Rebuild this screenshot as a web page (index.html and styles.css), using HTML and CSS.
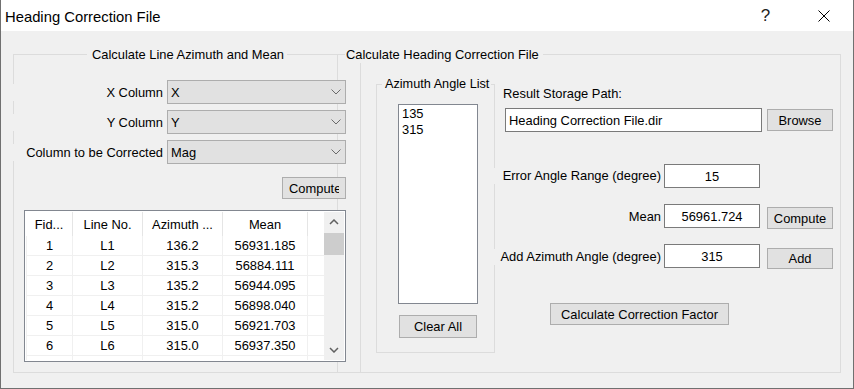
FILE: index.html
```html
<!DOCTYPE html>
<html lang="en">

<head>
  <meta charset="UTF-8" />
  <title>Heading Correction File</title>
  <link rel="stylesheet" href="styles.css">
</head>

<body>
  <div class="window">
    <div class="titlebar">
      <span class="title-text">Heading Correction File</span>
      <span class="title-help">?</span>
      <span class="title-close">
        <svg width="12" height="12" viewBox="0 0 12 12"><path d="M0.5 0.5 L11.5 11.5 M11.5 0.5 L0.5 11.5" stroke="#000" stroke-width="1" fill="none" /></svg>
      </span>
    </div>

    <div class="dialog">
      <!-- left: line azimuth -->
      <fieldset class="group group-line">
        <legend>Calculate Line Azimuth and Mean</legend>

        <div class="column-fields">
          <div class="field-row">
            <label class="field-label">X Column</label>
            <div class="combo"><span>X</span><svg width="10" height="6" viewBox="0 0 10 6"><path d="M0.5 0.5 L5 5 L9.5 0.5" fill="none" stroke="#6a6a6a" /></svg></div>
          </div>
          <div class="field-row">
            <label class="field-label">Y Column</label>
            <div class="combo"><span>Y</span><svg width="10" height="6" viewBox="0 0 10 6"><path d="M0.5 0.5 L5 5 L9.5 0.5" fill="none" stroke="#6a6a6a" /></svg></div>
          </div>
          <div class="field-row">
            <label class="field-label">Column to be Corrected</label>
            <div class="combo"><span>Mag</span><svg width="10" height="6" viewBox="0 0 10 6"><path d="M0.5 0.5 L5 5 L9.5 0.5" fill="none" stroke="#6a6a6a" /></svg></div>
          </div>
        </div>

        <div class="compute-row">
          <button class="btn btn-compute"><span>Compute</span></button>
        </div>

        <div class="table-view">
          <div class="grid">
            <div class="grid-head">
              <span>Fid...</span><span>Line No.</span><span>Azimuth ...</span><span>Mean</span><span></span>
            </div>
            <div class="grid-row"><span>1</span><span>L1</span><span>136.2</span><span>56931.185</span><span></span></div>
            <div class="grid-row"><span>2</span><span>L2</span><span>315.3</span><span>56884.111</span><span></span></div>
            <div class="grid-row"><span>3</span><span>L3</span><span>135.2</span><span>56944.095</span><span></span></div>
            <div class="grid-row"><span>4</span><span>L4</span><span>315.2</span><span>56898.040</span><span></span></div>
            <div class="grid-row"><span>5</span><span>L5</span><span>315.0</span><span>56921.703</span><span></span></div>
            <div class="grid-row"><span>6</span><span>L6</span><span>315.0</span><span>56937.350</span><span></span></div>
            <div class="grid-row"><span></span><span></span><span></span><span></span><span></span></div>
          </div>
          <div class="scrollbar">
            <div class="sb-arrow"><svg width="10" height="6" viewBox="0 0 10 6"><path d="M1 5 L5 1 L9 5" fill="none" stroke="#606060" stroke-width="1.5" /></svg></div>
            <div class="sb-thumb"></div>
            <div class="sb-track"></div>
            <div class="sb-arrow"><svg width="10" height="6" viewBox="0 0 10 6"><path d="M1 1 L5 5 L9 1" fill="none" stroke="#606060" stroke-width="1.5" /></svg></div>
          </div>
        </div>
      </fieldset>

      <!-- right: heading correction file -->
      <fieldset class="group group-heading">
        <legend>Calculate Heading Correction File</legend>

        <div class="inner-frame">
          <fieldset class="group group-list">
            <legend>Azimuth Angle List</legend>
            <div class="listbox">
              <div>135</div>
              <div>315</div>
            </div>
            <button class="btn btn-clear">Clear All</button>
          </fieldset>

          <div class="result-panel">
            <div class="panel-label">Result Storage Path:</div>
            <div class="form-row path-row">
              <input class="text-input path-input" type="text" value="Heading Correction File.dir">
              <button class="btn btn-browse">Browse</button>
            </div>
            <div class="form-row error-row">
              <label class="row-label wide">Error Angle Range (degree)</label>
              <input class="text-input" type="text" value="15">
            </div>
            <div class="form-row spaced-row">
              <label class="row-label">Mean</label>
              <input class="text-input" type="text" value="56961.724">
              <button class="btn btn-mean">Compute</button>
            </div>
            <div class="form-row spaced-row">
              <label class="row-label wide">Add Azimuth Angle (degree)</label>
              <input class="text-input" type="text" value="315">
              <button class="btn btn-add">Add</button>
            </div>
            <button class="btn btn-calc">Calculate Correction Factor</button>
          </div>
        </div>
      </fieldset>
    </div>
  </div>
</body>

</html>
```

FILE: styles.css
```css
* {
  box-sizing: border-box;
}

body {
  margin: 0;
  font-family: "Liberation Sans", Arial, sans-serif;
  font-size: 12.9px;
  color: #000;
  background: #fff;
}

.window {
  width: 854px;
  height: 389px;
  border: 1px solid #707070;
  border-top: 0;
  display: flex;
  flex-direction: column;
}

.titlebar {
  height: 31px;
  flex-shrink: 0;
  background: #fff;
  display: flex;
  align-items: center;
  padding-left: 4px;
}

.title-text {
  font-size: 14.8px;
  padding-top: 2px;
}

.title-help {
  margin-left: auto;
  width: 46px;
  text-align: center;
  font-size: 17px;
  font-weight: 300;
  color: #222;
  padding: 1px 3px 0 0;
}

.title-close {
  width: 46px;
  margin: 0 6px 0 11px;
  display: flex;
  justify-content: center;
  align-items: center;
  padding-top: 1px;
}

.dialog {
  flex: 1;
  background: #f0f0f0;
  display: flex;
  padding: 16px 12px 15px 12px;
}

/* group boxes */
.group {
  margin: 0;
  padding: 0;
  min-width: 0;
  border: 1px solid #dcdcdc;
}

.group legend {
  line-height: 15px;
  white-space: nowrap;
}

.group-line {
  width: 325px;
  flex-shrink: 0;
}

.group-line > legend {
  margin-left: 73px;
  padding: 0 3px 0 5px;
}

.group-heading {
  flex: 1;
  border-left: 0;
}

.group-heading > legend {
  margin-left: 7px;
  padding: 0 4px 0 1px;
}

/* left column */
.column-fields {
  display: flex;
  flex-direction: column;
  gap: 6px;
  margin: 18px -9px 0 0;
}

.field-row {
  display: flex;
  align-items: center;
  gap: 4px;
  height: 24px;
}

.field-label {
  flex: 1;
  text-align: right;
  line-height: 17px;
  margin-left: -2px;
  background: #f0f0f0;
}

.combo {
  width: 179px;
  height: 24px;
  border: 1px solid #adadad;
  background: #e1e1e1;
  display: flex;
  align-items: center;
  justify-content: space-between;
  padding: 0 4px 0 3px;
}

.btn {
  font: inherit;
  color: #000;
  background: #e1e1e1;
  border: 1px solid #adadad;
  padding: 0;
  height: 22px;
}

.compute-row {
  display: flex;
  justify-content: flex-end;
  margin: 13px -9px 0 0;
}

.btn-compute {
  width: 64px;
  text-align: left;
  padding-left: 6px;
}

.btn-compute span {
  display: block;
  width: 50px;
  overflow: hidden;
  white-space: nowrap;
}

/* table */
.table-view {
  margin: 11px -9px 0 10px;
  height: 152px;
  border: 1px solid #828790;
  padding: 1px;
  background: #fff;
  display: flex;
}

.grid {
  flex: 1;
  overflow: hidden;
}

.grid-head,
.grid-row {
  display: grid;
  grid-template-columns: 47px 70px 80px 85px 1fr;
}

.grid-head {
  height: 24px;
}

.grid-head span {
  display: flex;
  align-items: center;
  justify-content: center;
  border-right: 1px solid #e5e5e5;
}

.grid-head span:last-child {
  border-right: 0;
}

.grid-row {
  height: 20px;
  border-bottom: 1px solid #f0f0f0;
}

.grid-row span {
  text-align: center;
  line-height: 19px;
  border-right: 1px solid #f0f0f0;
}

.grid-row span:first-child {
  border-left: 1px solid #f0f0f0;
}

.grid-row span:last-child {
  border-right: 0;
}

.scrollbar {
  width: 20px;
  background: #f0f0f0;
  display: flex;
  flex-direction: column;
}

.sb-arrow {
  height: 20px;
  display: flex;
  align-items: center;
  justify-content: center;
}

.sb-thumb {
  height: 22px;
  margin-top: 1px;
  background: #cdcdcd;
}

.sb-track {
  flex: 1;
}

/* right column */
.inner-frame {
  margin: 1px 0 0 22px;
  height: 309px;
  border-left: 1px solid #dcdcdc;
  display: flex;
  align-items: flex-start;
}

.group-list {
  width: 119px;
  height: 276px;
  margin: 14px 0 0 15px;
  flex-shrink: 0;
}

.group-list > legend {
  margin-left: 5px;
  padding: 0 2px 0 3px;
  font-size: 12.7px;
}

.listbox {
  width: 80px;
  height: 200px;
  margin: 12px 0 0 21px;
  border: 1px solid #828790;
  background: #fff;
  padding: 1px 3px;
  line-height: 16px;
}

.btn-clear {
  display: block;
  width: 78px;
  height: 23px;
  margin: 11px 0 0 22px;
}

.result-panel {
  flex: 1;
  padding: 23px 7px 0 8px;
}

.panel-label {
  line-height: 16px;
}

.form-row {
  display: grid;
  grid-template-columns: 1fr 96px 70px;
  column-gap: 3px;
  align-items: start;
  height: 24px;
}

.path-row {
  margin-top: 6px;
}

.error-row {
  margin-top: 32px;
}

.spaced-row {
  margin-top: 16px;
}

.text-input {
  width: 100%;
  height: 24px;
  border: 1px solid #7a7a7a;
  background: #fff;
  font: inherit;
  color: #000;
  padding: 0 3px;
  text-align: center;
  outline: none;
}

.path-input {
  grid-column: 1 / 3;
  margin-left: 2px;
  text-align: left;
}

.row-label {
  align-self: center;
  text-align: right;
  line-height: 16px;
}

.row-label.wide {
  margin-left: -14px;
  background: #f0f0f0;
}

.form-row .btn {
  grid-column: 3;
  justify-self: end;
  width: 66px;
}

.btn-browse {
  margin-top: 1px;
}

.btn-mean {
  margin-top: 3px;
}

.btn.btn-add {
  height: 21px;
  margin-top: 4px;
}

.btn-calc {
  display: block;
  width: 179px;
  margin: 35px 0 0 47px;
}
```
